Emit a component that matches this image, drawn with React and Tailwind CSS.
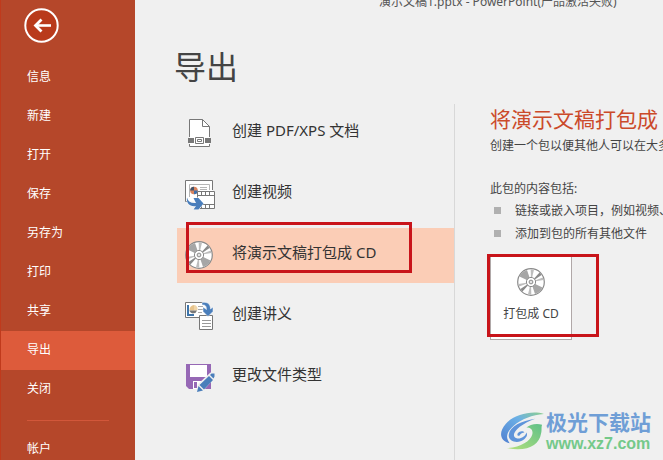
import React from 'react';
import clsx from 'clsx';

const navItems = ['信息', '新建', '打开', '保存', '另存为', '打印', '共享', '导出', '关闭'];

const DiscIcon = ({ className }) => (
  <svg viewBox="0 0 31 31" className={className} aria-hidden="true">
    <circle cx="15" cy="15" r="13.3" fill="#fff" stroke="#8a8a8a" strokeWidth="1.2" />
    <g fill="#a6a6a6">
      <path d="M15 15 3.500 9.500A12.700 12.700 0 0 1 11 3Z" />
      <path d="M15 15 26.500 20.500A12.700 12.700 0 0 1 19 27Z" />
    </g>
    <g fill="#8a8a8a">
      <path d="M15 15 23.500 5.600 25.600 8Z" />
      <path d="M15 15 6.500 24.400 4.400 22Z" />
    </g>
    <g fill="#bdbdbd">
      <path d="M15 15 26.800 10.500 27.500 13Z" />
      <path d="M15 15 3.200 19.500 2.500 17Z" />
      <path d="M15 15 14.700 2.300 18 2.700Z" />
      <path d="M15 15 15.300 27.700 12 27.300Z" />
    </g>
    <circle cx="15" cy="15" r="4.600" fill="#fff" stroke="#8a8a8a" />
    <circle cx="15" cy="15" r="1.900" fill="#e4e4e4" stroke="#8a8a8a" />
  </svg>
);

const PdfIcon = ({ className }) => (
  <svg viewBox="0 0 31 31" className={className} aria-hidden="true">
    <path d="M5.500 28.500v-27h13l7 7v20z" fill="#fff" />
    <path d="M5.500 19V1.500h13l7 7V19M18.500 1.500v7h7M5.500 26v2.500h20V26" fill="none" stroke="#777" />
    <path d="M4 20h6v5H4zM21 20h6v5h-6z" fill="#777" />
    <path d="M11.500 19.500h8v6h-8z" fill="#fff" stroke="#777" />
    <path d="M13.500 21.500h4v2h-4z" fill="#fff" stroke="#777" />
  </svg>
);

const VideoIcon = ({ className }) => (
  <svg viewBox="0 0 31 31" className={className} aria-hidden="true">
    <path d="M1.500 22.500v-21h27v12h-15v9z" fill="#fff" />
    <path d="M3 22.500H1.500v-21h27V11" fill="none" stroke="#777" />
    <path d="M5.500 18V5.500h20V11" fill="none" stroke="#b5b5b5" />
    <circle cx="10" cy="11.500" r="3.800" fill="#d9835e" />
    <path d="M10 11.500V7.700a3.800 3.800 0 0 0-3.800 3.800z" fill="#44546a" />
    <path d="M10 11.500h3.800A3.800 3.800 0 0 1 10 15.300z" fill="#3f6fa8" />
    <path d="M16 8.500h7M16 10.500h7" stroke="#b5b5b5" />
    <path d="M13.500 12.500h17v17h-17z" fill="#fff" stroke="#777" />
    <path d="M14 16.500h16M14 25.500h16" stroke="#777" />
    <path d="M17.500 13v3M21.500 13v3M25.500 13v3M17.500 26v3M21.500 26v3M25.500 26v3" stroke="#777" strokeWidth="1" />
    <path
      d="M3 18.500c1 4 4 6 9 5.500l-2.500-5h5l5 5.500-5 6H9.500l2.500-3.500C6 28 2 24.500 3 18.500z"
      fill="#4a7ebb"
      stroke="#fff"
      strokeWidth="1"
      strokeLinejoin="round"
      paintOrder="stroke"
    />
  </svg>
);

const HandoutIcon = ({ className }) => (
  <svg viewBox="0 0 31 31" className={className} aria-hidden="true">
    <path d="M1.500 1.500h20v15h-20z" fill="#fff" />
    <path d="M19 1.500H1.500v15h14" fill="none" stroke="#777" />
    <path d="M4 4v10h6" fill="none" stroke="#3f75aa" strokeWidth="2" />
    <path d="M10 9.500V4a5 5 0 0 0-4.500 5.500z" fill="#e8c48c" />
    <path d="M10 9.500V4c4 .5 4 5 3 5.500z" fill="#f0d5a8" />
    <path d="M5.500 9.500H13A4 4 0 0 1 5.500 10z" fill="#777" />
    <path d="M14 5.500h5M14 8.500h5M14 11.500h4" stroke="#aaa" />
    <path d="M15.500 14.500h13v14h-13z" fill="#fff" stroke="#777" />
    <path d="M18 19.500h9M18 22.500h9M18 25.500h9" stroke="#999" />
    <path d="M18 1.500c6-1 8.500 2 8.500 6.500l2.500-2v4.500l-5 5-5-5V6l3.500 2.500c0-3-1-5-4.500-4.500z" fill="#4a7ebb" stroke="#fff" strokeWidth=".5" />
  </svg>
);

const SaveIcon = ({ className }) => (
  <svg viewBox="0 0 31 31" className={className} aria-hidden="true">
    <path d="M2 2h25v25H5l-3-3z" fill="#9668b5" />
    <path d="M6 3h17v12H6zM9 19h12v8H9z" fill="#fff" />
    <path d="M10 20h3v6h-3z" fill="#9668b5" />
    <path d="M11.500 31l2.500-9L26.500 10.500H31v5L19 29z" fill="#f0f0f0" />
    <path d="M13 30l1.500-6 4.500 4.500zM15.500 23l9.500-9 4 4-9 9.500zM26 13l1.500-1.500h3V14.500l-1 2z" fill="#4a7ebb" />
  </svg>
);

const exportOptions = [
  { label: '创建 PDF/XPS 文档', Icon: PdfIcon },
  { label: '创建视频', Icon: VideoIcon },
  { label: '将演示文稿打包成 CD', Icon: DiscIcon, active: true },
  { label: '创建讲义', Icon: HandoutIcon },
  { label: '更改文件类型', Icon: SaveIcon },
];

const Sidebar = () => (
  <nav className="flex w-[135px] shrink-0 flex-col border-l border-[#c03a1c] bg-[#b5472a] text-xs text-white">
    <button type="button" aria-label="返回" className="mt-2 ml-[23px] size-9">
      <svg viewBox="0 0 36 36" className="size-9" fill="none" stroke="#fff">
        <circle cx="17.500" cy="17.500" r="16.200" fill="#b93a1b" strokeWidth="2" />
        <path d="M27 17.500H12" strokeWidth="2.600" />
        <path d="M17.500 11.500 11.500 17.500 17.500 23.500" strokeWidth="2.800" />
      </svg>
    </button>
    <ul className="mt-[14px]">
      {navItems.map((item) => (
        <li key={item}>
          <button
            type="button"
            className={clsx('block h-[39px] w-full pb-0.5 pl-[26px] text-left', item === '导出' && 'bg-[#dd5b3b]')}
          >
            {item}
          </button>
        </li>
      ))}
    </ul>
    <hr className="mt-[11px] mr-[26px] ml-[26px] border-[#d2573a]" />
    <button type="button" className="mt-[18px] pl-[26px] text-left leading-5">帐户</button>
  </nav>
);

const Watermark = () => (
  <div className="absolute right-3 bottom-1.5 flex items-center gap-0.5 whitespace-nowrap">
    <svg viewBox="0 0 44 42" className="w-[43px]" aria-hidden="true">
      <defs>
        <linearGradient id="swirlBlue" x1="0" y1="1" x2="1" y2="0">
          <stop offset="0" stopColor="#4f7fd0" />
          <stop offset="0.6" stopColor="#6cb0e6" />
          <stop offset="1" stopColor="#8fd08c" />
        </linearGradient>
        <linearGradient id="swirlGreen" x1="0" y1="1" x2="1" y2="0">
          <stop offset="0" stopColor="#b4e07c" />
          <stop offset="1" stopColor="#5fc088" />
        </linearGradient>
      </defs>
      <path d="M44 3C31-1 13 4 5 13c-8 9-6 18 4 20C4 27 6 21 13 15 21 8 32 4 44 3z" fill="url(#swirlBlue)" />
      <path d="M35 8C21 10 9 16 8 24c-1 6 6 9 12 7 5-2 8-6 6-9-1 4-6 7-10 6-8-3 2-14 19-20z" fill="#5f94da" />
      <path d="M24 22c-1-2-5-2-7 1-1 2 1 3 2 2 1-2 3-3 5-3z" fill="#5f94da" />
      <path d="M42 14c-6-2-13 0-16 3 5 0 7 3 6 7-2 7-12 13-26 14 21 4 33-3 35-15 1-4 0-6 1-9z" fill="url(#swirlGreen)" />
    </svg>
    <div className="flex flex-col">
      <span className="text-[21px] leading-6 font-bold text-[#6f9ed6]">极光下载站</span>
      <span className="font-['Liberation_Sans','Noto_Sans_CJK_SC',sans-serif] text-base leading-5 font-bold text-[#74c98a]">
        www.xz7.com
      </span>
    </div>
  </div>
);

const App = () => {
  return (
    <div className="relative flex h-screen overflow-hidden bg-[#f0f0f0] font-['Noto_Sans','Noto_Sans_CJK_SC',sans-serif] text-[#333]">
      <Sidebar />

      <main className="flex min-w-0 flex-1 flex-col pl-[42px]">
        <div className="-mt-2 h-5 pl-[202px] text-xs leading-5 whitespace-nowrap text-[#555]">
          演示文稿1.pptx - PowerPoint(产品激活失败)
        </div>
        <h1 className="mt-[31px] -ml-[3px] text-[32px] leading-12 text-[#444]">导出</h1>

        <div className="mt-[13px] flex min-h-0 flex-1">
          <ul className="flex w-[278px] shrink-0 flex-col gap-1.5 border-r border-[#d8d8d8] pt-0.5">
            {exportOptions.map(({ label, Icon, active }) => (
              <li key={label} className="relative">
                <button
                  type="button"
                  className={clsx('flex h-[55px] w-full items-center gap-[17px] pl-[7px] text-[15px]', active && 'bg-[#fbcdb6]')}
                >
                  <Icon className="size-[31px]" />
                  <span className="pb-1.5 whitespace-nowrap">{label}</span>
                </button>
                {active && (
                  <div className="pointer-events-none absolute -top-1.5 left-[9px] h-[51px] w-[226px] border-3 border-[#c8141a]" />
                )}
              </li>
            ))}
          </ul>

          <section className="flex min-w-0 flex-1 flex-col items-start overflow-hidden pl-[35px] text-xs whitespace-nowrap text-[#444]">
            <h2 className="pb-0.5 text-[21px] leading-[30px] text-[#cb4a2a]">将演示文稿打包成</h2>
            <p className="leading-5">创建一个包以便其他人可以在大多</p>
            <p className="mt-[23px] leading-5">此包的内容包括:</p>
            <ul>
              <li className="flex h-[23px] items-center gap-[14px] pl-1">
                <span className="size-[7px] bg-[#b0b0b0]" />
                链接或嵌入项目，例如视频、
              </li>
              <li className="flex h-[23px] items-center gap-[14px] pl-1">
                <span className="size-[7px] bg-[#b0b0b0]" />
                添加到包的所有其他文件
              </li>
            </ul>
            <div className="relative mt-[11px]">
              <button
                type="button"
                className="flex h-[84px] w-[82px] flex-col items-center gap-2 border border-[#b0a8a8] bg-white pt-2.5"
              >
                <DiscIcon className="size-[31px]" />
                <span>打包成 CD</span>
              </button>
              <div className="pointer-events-none absolute -top-0.5 -left-[3px] h-[83px] w-28 border-3 border-[#c8141a]" />
            </div>
          </section>
        </div>
      </main>

      <Watermark />
    </div>
  );
};

export default App;
